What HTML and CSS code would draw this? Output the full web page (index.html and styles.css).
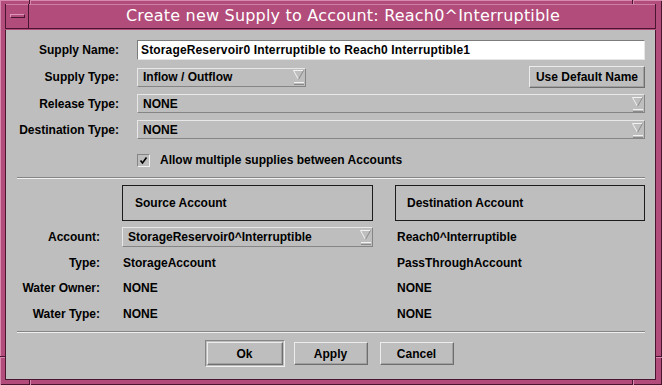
FILE: index.html
```html
<!DOCTYPE html>
<html lang="en">
<head>
    <meta charset="UTF-8">
    <title>Create new Supply to Account</title>
    <link rel="stylesheet" href="styles.css">
</head>
<body>
    <div class="window">
        <span class="tick tick-top tick-left-x"></span>
        <span class="tick tick-top tick-right-x"></span>
        <span class="tick tick-bottom tick-left-x"></span>
        <span class="tick tick-bottom tick-right-x"></span>
        <span class="tick tick-side tick-left tick-low"></span>
        <span class="tick tick-side tick-right tick-low"></span>

        <div class="titlebar">
            <div class="menu-btn"><span class="menu-bar"></span></div>
            <div class="title">Create new Supply to Account: Reach0^Interruptible</div>
        </div>

        <div class="panel">
            <div class="row row-name">
                <div class="label">Supply Name:</div>
                <div class="text-field">StorageReservoir0 Interruptible to Reach0 Interruptible1</div>
            </div>
            <div class="row row-type">
                <div class="label">Supply Type:</div>
                <div class="field-line">
                    <div class="dropdown dropdown-short">
                        <span>Inflow / Outflow</span>
                        <svg class="arrow" width="11" height="15" viewBox="0 0 11 15">
                            <path d="M0.5 0.5H10" stroke="#f2f2f2" fill="none"/>
                            <path d="M0.5 0.5L5.5 9.5" stroke="#f2f2f2" fill="none"/>
                            <path d="M10.5 0.5L5.5 9.5" stroke="#8a8a8a" fill="none"/>
                            <rect x="1" y="12" width="10" height="1" fill="#f2f2f2"/>
                            <rect x="1" y="14" width="10" height="1" fill="#8a8a8a"/>
                        </svg>
                    </div>
                    <div class="button">Use Default Name</div>
                </div>
            </div>
            <div class="row row-release">
                <div class="label">Release Type:</div>
                <div class="dropdown">
                    <span>NONE</span>
                    <svg class="arrow" width="11" height="15" viewBox="0 0 11 15">
                        <path d="M0.5 0.5H10" stroke="#f2f2f2" fill="none"/>
                        <path d="M0.5 0.5L5.5 9.5" stroke="#f2f2f2" fill="none"/>
                        <path d="M10.5 0.5L5.5 9.5" stroke="#8a8a8a" fill="none"/>
                        <rect x="1" y="12" width="10" height="1" fill="#f2f2f2"/>
                        <rect x="1" y="14" width="10" height="1" fill="#8a8a8a"/>
                    </svg>
                </div>
            </div>
            <div class="row row-dest">
                <div class="label">Destination Type:</div>
                <div class="dropdown">
                    <span>NONE</span>
                    <svg class="arrow" width="11" height="15" viewBox="0 0 11 15">
                        <path d="M0.5 0.5H10" stroke="#f2f2f2" fill="none"/>
                        <path d="M0.5 0.5L5.5 9.5" stroke="#f2f2f2" fill="none"/>
                        <path d="M10.5 0.5L5.5 9.5" stroke="#8a8a8a" fill="none"/>
                        <rect x="1" y="12" width="10" height="1" fill="#f2f2f2"/>
                        <rect x="1" y="14" width="10" height="1" fill="#8a8a8a"/>
                    </svg>
                </div>
            </div>
            <div class="row row-check">
                <div class="label"></div>
                <div class="check-line">
                    <span class="checkbox">
                        <svg width="11" height="11" viewBox="0 0 11 11">
                            <path d="M2.5 5.5L4.5 8L8.5 2.5" stroke="#000" stroke-width="1.6" fill="none"/>
                        </svg>
                    </span>
                    <span>Allow multiple supplies between Accounts</span>
                </div>
            </div>

            <div class="separator sep-top"></div>

            <div class="acc-row acc-head">
                <div></div>
                <div class="acc-box">Source Account</div>
                <div class="acc-box acc-box-dest">Destination Account</div>
            </div>
            <div class="acc-row acc-account">
                <div class="acc-label">Account:</div>
                <div class="dropdown dropdown-acc">
                    <span>StorageReservoir0^Interruptible</span>
                    <svg class="arrow" width="11" height="15" viewBox="0 0 11 15">
                        <path d="M0.5 0.5H10" stroke="#f2f2f2" fill="none"/>
                        <path d="M0.5 0.5L5.5 9.5" stroke="#f2f2f2" fill="none"/>
                        <path d="M10.5 0.5L5.5 9.5" stroke="#8a8a8a" fill="none"/>
                        <rect x="1" y="12" width="10" height="1" fill="#f2f2f2"/>
                        <rect x="1" y="14" width="10" height="1" fill="#8a8a8a"/>
                    </svg>
                </div>
                <div class="acc-value dest-value">Reach0^Interruptible</div>
            </div>
            <div class="acc-row acc-type">
                <div class="acc-label">Type:</div>
                <div class="acc-value">StorageAccount</div>
                <div class="acc-value dest-value">PassThroughAccount</div>
            </div>
            <div class="acc-row acc-owner">
                <div class="acc-label">Water Owner:</div>
                <div class="acc-value">NONE</div>
                <div class="acc-value dest-value">NONE</div>
            </div>
            <div class="acc-row acc-water">
                <div class="acc-label">Water Type:</div>
                <div class="acc-value">NONE</div>
                <div class="acc-value dest-value">NONE</div>
            </div>

            <div class="separator sep-bottom"></div>

            <div class="actions">
                <div class="default-ring"><div class="button action-btn">Ok</div></div>
                <div class="button action-btn btn-apply">Apply</div>
                <div class="button action-btn">Cancel</div>
            </div>
        </div>
    </div>
</body>
</html>
```

FILE: styles.css
```css
*{
    margin: 0;
    padding: 0;
    box-sizing: border-box;
}
body {
    background: #b24c7a;
    font-family: "Liberation Sans", Arial, sans-serif;
    font-size: 12px;
    font-weight: bold;
    color: #000;
}
.window {
    position: relative;
    width: 662px;
    height: 385px;
    background: #b24c7a;
    padding: 4px 6px 5px 5px;
    display: flex;
    flex-direction: column;
    box-shadow: inset 1px 1px 0 #d78aae, inset -1px -1px 0 #4a1530;
}

/* frame resize corner marks */
.tick {
    position: absolute;
    background: #4a1530;
}
.tick-top, .tick-bottom {
    width: 1px;
    height: 4px;
    box-shadow: 1px 0 0 #d78aae;
}
.tick-top { top: 0; }
.tick-bottom { bottom: 0; height: 5px; }
.tick-left-x { left: 29px; }
.tick-right-x { left: 632px; }
.tick-side {
    height: 1px;
    width: 5px;
    box-shadow: 0 1px 0 #d78aae;
}
.tick-left { left: 0; }
.tick-right { right: 0; width: 6px; }
.tick-low { top: 356px; }

/* title bar */
.titlebar {
    display: flex;
    height: 25px;
    margin-bottom: 1px;
    border-left: 1px solid #4a1530;
    border-right: 1px solid #4a1530;
    border-bottom: 1px solid #4a1530;
    box-shadow: inset 0 1px 0 #cf7ea5;
}
.menu-btn {
    width: 23px;
    border-right: 1px solid #4a1530;
    display: flex;
    align-items: center;
    justify-content: center;
}
.menu-bar {
    width: 15px;
    height: 4px;
    background: #b24c7a;
    border-top: 1px solid #dd95b8;
    border-left: 1px solid #dd95b8;
    border-bottom: 1px solid #4a1530;
    border-right: 1px solid #4a1530;
}
.title {
    flex: 1;
    color: #fff;
    font-family: "DejaVu Sans", sans-serif;
    font-weight: normal;
    font-size: 16px;
    letter-spacing: 0.2px;
    text-align: center;
    line-height: 24px;
    padding-left: 2px;
}

/* main panel */
.panel {
    flex: 1;
    background: #bebebe;
    border-left: 1px solid #4a1530;
    border-right: 1px solid #4a1530;
    border-bottom: 1px solid #4a1530;
    padding: 10px 10px 0 11px;
    display: flex;
    flex-direction: column;
}
.row {
    display: grid;
    grid-template-columns: 102px 1fr;
    column-gap: 18px;
    align-items: center;
}
.row-name { height: 20px; }
.row-type { height: 22px; margin-top: 6px; }
.row-release { height: 19px; margin-top: 6px; }
.row-dest { height: 19px; margin-top: 7px; }
.row-check { height: 14px; margin-top: 14px; }
.label {
    text-align: right;
    white-space: nowrap;
}
.text-field {
    height: 20px;
    background: #fff;
    border-top: 1px solid #7c7c7c;
    border-left: 1px solid #7c7c7c;
    border-bottom: 1px solid #e6e6e6;
    border-right: 1px solid #e6e6e6;
    padding-left: 3px;
    line-height: 18px;
    letter-spacing: 0.15px;
    white-space: nowrap;
    overflow: hidden;
}
.field-line {
    display: flex;
    justify-content: space-between;
    align-items: center;
}
.dropdown {
    height: 19px;
    display: flex;
    align-items: center;
    justify-content: space-between;
    border-top: 1px solid #e8e8e8;
    border-left: 1px solid #e8e8e8;
    border-bottom: 1px solid #858585;
    border-right: 1px solid #858585;
    padding: 0 1px 0 5px;
}
.dropdown-short { width: 169px; }
.dropdown-acc { height: 20px; }
.arrow { display: block; margin-top: 1px; }
.button {
    display: flex;
    align-items: center;
    justify-content: center;
    height: 22px;
    padding: 0 6px;
    border-top: 1px solid #ececec;
    border-left: 1px solid #ececec;
    border-bottom: 1px solid #6e6e6e;
    border-right: 1px solid #6e6e6e;
    box-shadow: inset -1px -1px 0 #a0a0a0;
    white-space: nowrap;
}
.check-line {
    display: flex;
    align-items: center;
    gap: 10px;
}
.checkbox {
    width: 13px;
    height: 13px;
    display: flex;
    align-items: center;
    justify-content: center;
    border-top: 1px solid #858585;
    border-left: 1px solid #858585;
    border-bottom: 1px solid #f0f0f0;
    border-right: 1px solid #f0f0f0;
}
.separator {
    height: 2px;
    border-top: 1px solid #858585;
    border-bottom: 1px solid #f0f0f0;
}
.sep-top { margin-top: 10px; }
.sep-bottom { margin-top: 7px; }

/* account section */
.acc-row {
    display: grid;
    grid-template-columns: 83px 251px 250px;
    column-gap: 22px;
    align-items: center;
    height: 20px;
}
.acc-head { height: 36px; margin-top: 6px; }
.acc-account { margin-top: 6px; }
.acc-type { margin-top: 6px; }
.acc-owner { margin-top: 5px; }
.acc-water { margin-top: 6px; }
.acc-box {
    height: 36px;
    border: 1px solid #1c1c1c;
    padding-left: 12px;
    line-height: 34px;
}
.acc-box-dest { padding-left: 11px; }
.acc-label {
    text-align: right;
    white-space: nowrap;
}
.acc-value { padding-left: 1px; }
.dest-value { padding-left: 2px; }

/* bottom buttons */
.actions {
    display: flex;
    justify-content: center;
    align-items: center;
    margin-top: 7px;
    height: 27px;
    padding-right: 4px;
}
.default-ring {
    width: 80px;
    height: 27px;
    padding: 1px;
    margin-right: 9px;
    border-top: 1px solid #858585;
    border-left: 1px solid #858585;
    border-bottom: 1px solid #f0f0f0;
    border-right: 1px solid #f0f0f0;
}
.action-btn {
    width: 74px;
    height: 23px;
}
.btn-apply { margin-right: 12px; }
.default-ring .action-btn {
    width: 76px;
}
```
